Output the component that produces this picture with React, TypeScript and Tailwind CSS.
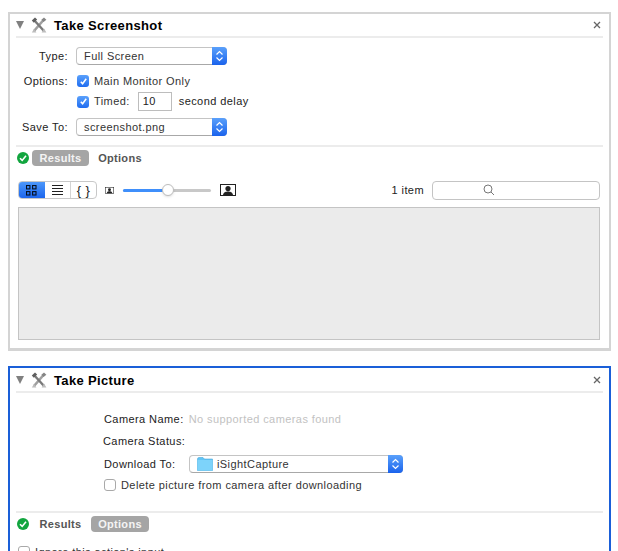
const font = "font-['Liberation_Sans',Arial,sans-serif]";

function ToolsIcon() {
  return (
    <svg width="16" height="16" viewBox="0 0 16 16" className="block shrink-0">
      <path d="M3 14 L12.5 3" stroke="#a0a0a0" strokeWidth="2.6" />
      <path d="M3 3 L13 14" stroke="#7a7a7a" strokeWidth="2.4" />
      <path d="M0.8 3.6 L4 0.6 L6.2 2.6 L2.8 5.8 Z" fill="#5f5f5f" />
      <path d="M10.4 2.8 L13 0.6 L15.4 2.8 L12.6 5 Z" fill="#858585" />
      <path d="M0.8 15.4 L5.4 15.4 L3 12 Z" fill="#bcbcbc" />
      <path d="M10.6 15.4 L15.4 15.4 L13 11.6 Z" fill="#bcbcbc" />
    </svg>
  );
}

function Header({ title, className = '' }: { title: string; className?: string }) {
  return (
    <div className={`flex h-[22px] items-center mx-[6px] border-b-2 border-[#ececec] box-content ${className}`}>
      <span className="block w-0 h-0 border-x-[4.5px] border-x-transparent border-t-[8px] border-t-[#808080]" />
      <span className="ml-[7px]"><ToolsIcon /></span>
      <span className="ml-[7px] text-[13px] font-bold tracking-[0.35px] text-black leading-none">{title}</span>
      <svg width="8" height="8" viewBox="0 0 8 8" className="ml-auto mr-[2px]">
        <path d="M1 1 L7 7 M7 1 L1 7" stroke="#666" strokeWidth="1.3" />
      </svg>
    </div>
  );
}

function Stepper() {
  return (
    <span className="ml-auto flex h-[18px] w-[15px] items-center justify-center rounded-r-[4px] bg-gradient-to-b from-[#5aa0fb] to-[#1a62ec] -mr-px">
      <svg width="9" height="12" viewBox="0 0 9 12">
        <path d="M1.5 4.5 L4.5 1.5 L7.5 4.5 M1.5 7.5 L4.5 10.5 L7.5 7.5" fill="none" stroke="#fff" strokeWidth="1.2" />
      </svg>
    </span>
  );
}

function Select({ width, children }: { width: string; children: React.ReactNode }) {
  return (
    <div className={`flex h-[18px] items-center rounded-[4px] border border-[#c4c4c4] border-b-[#a8a8a8] bg-white box-border ${width}`}>
      {children}
      <Stepper />
    </div>
  );
}

function Check({ on }: { on: boolean }) {
  return on ? (
    <span className="flex size-[12px] shrink-0 items-center justify-center rounded-[3px] bg-gradient-to-b from-[#5aa0fb] to-[#1f6cf0]">
      <svg width="9" height="9" viewBox="0 0 9 9">
        <path d="M1.8 4.8 L3.6 6.8 L7.2 1.8" fill="none" stroke="#fff" strokeWidth="1.5" />
      </svg>
    </span>
  ) : (
    <span className="block size-[12px] shrink-0 rounded-[3px] border border-[#a9a9a9] bg-white" />
  );
}

function Tabs({ active }: { active: 'Results' | 'Options' }) {
  const pill = 'flex h-[16px] items-center justify-center rounded-[4px] bg-[#a5a5a5] text-[#f4f4f4]';
  const plain = 'flex h-[16px] items-center justify-center text-[#555]';
  return (
    <div className="flex h-[16px] items-center ml-[7px] text-[11px] font-bold tracking-[0.3px]">
      <svg width="12" height="12" viewBox="0 0 12 12" className="shrink-0">
        <circle cx="6" cy="6" r="6" fill="#12a53f" />
        <path d="M3 6.2 L5.2 8.4 L9 3.8" fill="none" stroke="#fff" strokeWidth="1.6" />
      </svg>
      <span className={`ml-[3px] w-[57px] ${active === 'Results' ? pill : plain}`}>Results</span>
      <span className={`ml-[2px] w-[58px] ${active === 'Options' ? pill : plain}`}>Options</span>
    </div>
  );
}

function Portrait({ size }: { size: 'sm' | 'lg' }) {
  const big = size === 'lg';
  return (
    <svg width={big ? 16 : 9} height={big ? 12 : 7} viewBox="0 0 16 12" className="block shrink-0">
      <rect x="0.5" y="0.5" width="15" height="11" fill="#fff" stroke="#222" />
      <circle cx="8" cy="4.6" r="2.6" fill="#222" />
      <path d="M3 11 C3.5 8 6 7.5 8 7.5 C10 7.5 12.5 8 13 11 Z" fill="#222" />
    </svg>
  );
}

export default function App() {
  return (
    <div className={`${font} h-[551px] overflow-hidden bg-white pt-3 px-2 text-[11px] tracking-[0.42px] text-[#222]`}>
      {/* Take Screenshot */}
      <section className="h-[339px] w-[603px] border-2 border-b-[3px] border-[#d4d4d4] box-border">
        <Header title="Take Screenshot" />
        <div className="mt-[9px] flex items-center">
          <span className="w-[58px] text-right">Type:</span>
          <div className="ml-[8px]">
            <Select width="w-[151px]"><span className="ml-[7px] text-[#333]">Full Screen</span></Select>
          </div>
        </div>
        <div className="mt-[9px] flex h-[14px] items-center">
          <span className="w-[58px] text-right">Options:</span>
          <span className="ml-[9px]"><Check on /></span>
          <span className="ml-[5px] text-[#333]">Main Monitor Only</span>
        </div>
        <div className="mt-[4px] flex h-[19px] items-center">
          <span className="ml-[67px]"><Check on /></span>
          <span className="ml-[5px] text-[#333]">Timed:</span>
          <span className="ml-[8px] flex h-[19px] w-[34px] items-center border border-[#bdbdbd] pl-[4px]">10</span>
          <span className="ml-[7px]">second delay</span>
        </div>
        <div className="mt-[7px] flex items-center">
          <span className="w-[58px] text-right">Save To:</span>
          <div className="ml-[8px]">
            <Select width="w-[151px]"><span className="ml-[7px] text-[#333]">screenshot.png</span></Select>
          </div>
        </div>
        <div className="mx-[6px] mt-[9px] mb-[3px] h-[2px] bg-[#ececec]" />
        <Tabs active="Results" />

        <div className="mt-[15px] flex h-[18px] items-center pl-[8px] pr-[9px]">
          <div className="flex h-[18px] w-[79px] overflow-hidden rounded-[4px] border border-[#c8c8c8] bg-white">
            <span className="-my-px -ml-px flex w-[27px] items-center justify-center bg-gradient-to-b from-[#4f9afb] to-[#1a62ec]">
              <svg width="11" height="11" viewBox="0 0 11 11" fill="none" stroke="#06101f" strokeWidth="1.1">
                <rect x="0.5" y="0.5" width="3.4" height="3.4" />
                <rect x="6.6" y="0.5" width="3.4" height="3.4" />
                <rect x="0.5" y="6.6" width="3.4" height="3.4" />
                <rect x="6.6" y="6.6" width="3.4" height="3.4" />
              </svg>
            </span>
            <span className="flex w-[26px] items-center justify-center border-r border-[#d4d4d4]">
              <svg width="11" height="10" viewBox="0 0 11 10" stroke="#222" strokeWidth="1">
                <path d="M0 0.5 H11 M0 3.5 H11 M0 6.5 H11 M0 9.5 H11" />
              </svg>
            </span>
            <span className="flex flex-1 items-center justify-center text-[13px] font-normal leading-none text-[#222]">{'{ }'}</span>
          </div>
          <span className="ml-[8px]"><Portrait size="sm" /></span>
          <div className="relative ml-[9px] h-[3px] w-[88px] rounded-full bg-[#c8c8c8]">
            <div className="h-[3px] w-[40px] rounded-full bg-[#3f8ffb]" />
            <span className="absolute left-[39px] top-[-5px] size-[12px] rounded-full border border-[#bdbdbd] bg-white shadow-sm" />
          </div>
          <span className="ml-[9px]"><Portrait size="lg" /></span>
          <span className="ml-auto text-[#222]">1 item</span>
          <div className="ml-[8px] flex h-[19px] w-[168px] items-center rounded-[4px] border border-[#c4c4c4] bg-white pl-[50px]">
            <svg width="12" height="12" viewBox="0 0 12 12" fill="none" stroke="#777" strokeWidth="1">
              <circle cx="5" cy="5" r="4" />
              <path d="M8 8 L11 11" />
            </svg>
          </div>
        </div>

        <div className="ml-[8px] mt-[8px] h-[133px] w-[582px] border border-[#c4c4c4] bg-[#ebebeb]" />
      </section>

      {/* Take Picture */}
      <section className="mt-[15px] h-[300px] w-[603px] border-2 border-[#1a5fd8] box-border">
        <Header title="Take Picture" className="mt-px" />
        <div className="mt-[19px] flex h-[14px] items-center">
          <span className="ml-[94px] text-[#222]">Camera Name:</span>
          <span className="ml-[5px] text-[#c2c2c2]">No supported cameras found</span>
        </div>
        <div className="mt-[8px] flex h-[14px] items-center">
          <span className="ml-[93px] text-[#222]">Camera Status:</span>
        </div>
        <div className="mt-[7px] flex items-center">
          <span className="ml-[94px] w-[85px] text-[#222]">Download To:</span>
          <Select width="w-[214px]">
            <svg width="16" height="14" viewBox="0 0 16 14" className="ml-[7px] shrink-0">
              <path d="M0.5 2 Q0.5 0.5 2 0.5 H6 L7.5 2 H15.5 V13.5 H0.5 Z" fill="#62c5f5" stroke="#4ba9dc" strokeWidth="0.6" />
              <rect x="0.5" y="3" width="15" height="10.5" fill="#7dd3fa" />
            </svg>
            <span className="ml-[4px] text-[#333]">iSightCapture</span>
          </Select>
        </div>
        <div className="mt-[6px] flex h-[12px] items-center">
          <span className="ml-[94px]"><Check on={false} /></span>
          <span className="ml-[5px] text-[#333]">Delete picture from camera after downloading</span>
        </div>
        <div className="mx-[6px] mt-[20px] mb-[3px] h-[2px] bg-[#ececec]" />
        <Tabs active="Options" />
        <div className="mt-[14px] flex h-[12px] items-center">
          <span className="ml-[8px]"><Check on={false} /></span>
          <span className="ml-[5px] text-[#333]">Ignore this action's input</span>
        </div>
      </section>
    </div>
  );
}
